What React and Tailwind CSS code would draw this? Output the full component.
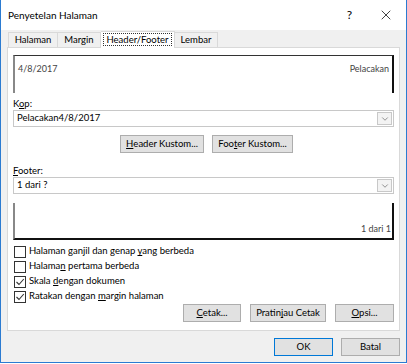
import { X, ChevronDown } from "lucide-react";

const font = { fontFamily: 'Lato, "Noto Sans", sans-serif' };

function Btn({ children, className = "", primary = false }) {
  return (
    <button
      className={`h-[18px] bg-[#e1e1e1] border whitespace-nowrap text-[9.5px] leading-none text-black flex items-center justify-center ${
        primary ? "border-[#0078d7] border-[1.5px]" : "border-[#adadad]"
      } ${className}`}
    >
      {children}
    </button>
  );
}

function Check({ checked, children }) {
  return (
    <div className="flex items-center gap-[3px] h-[15px]">
      <div className="w-[12px] h-[12px] border border-[#333] bg-white flex items-center justify-center">
        {checked && (
          <svg width="10" height="10" viewBox="0 0 10 10">
            <path d="M1.5 5 L4 7.5 L8.8 2" fill="none" stroke="#333" strokeWidth="1.1" />
          </svg>
        )}
      </div>
      <span className="text-[9.5px] text-black whitespace-nowrap">{children}</span>
    </div>
  );
}

function Select({ value }) {
  return (
    <div className="h-[17px] bg-white border border-[#c8c8c8] flex items-center justify-between">
      <span className="pl-[3px] text-[9.5px] text-black">{value}</span>
      <div className="w-[15px] h-[13px] mr-[1px] border border-[#c8c8c8] bg-[#f3f3f3] flex items-center justify-center">
        <ChevronDown size={10} strokeWidth={1.5} color="#555" />
      </div>
    </div>
  );
}

export default function App() {
  return (
    <div style={font} className="w-[407px] h-[364px] bg-white">
      <div className="w-[407px] h-[363px] border-x border-b border-[#2b7bd1] flex flex-col bg-[#f0f0f0]">
        <div className="h-[30px] shrink-0 bg-white flex items-center justify-between pl-[7px] pr-[12px]">
          <span className="text-[10px] text-black">Penyetelan Halaman</span>
          <div className="flex items-center gap-[26px]">
            <span className="text-[12px] text-black">?</span>
            <X size={16} strokeWidth={1.2} color="#111" />
          </div>
        </div>

        <div className="flex items-end pl-[7px] h-[17px] shrink-0">
          <div className="h-[15px] w-[50px] border border-b-0 border-[#d9d9d9] bg-[#f0f0f0] text-[9.5px] leading-[14px] text-center text-black">Halaman</div>
          <div className="h-[15px] w-[43px] border border-b-0 border-l-0 border-[#d9d9d9] bg-[#f0f0f0] text-[9.5px] leading-[14px] text-center text-black">Margin</div>
          <div className="h-[17px] w-[74px] pt-[1px] border border-b-0 border-l-0 border-[#d9d9d9] bg-white text-[9.5px] leading-[13px] text-center text-black relative z-10 -mb-[1px]">
            <span className="border border-dotted border-[#333] px-[2px]">Header/Footer</span>
          </div>
          <div className="h-[15px] w-[43px] border border-b-0 border-l-0 border-[#d9d9d9] bg-[#f0f0f0] text-[9.5px] leading-[14px] text-center text-black">Lembar</div>
        </div>

        <div className="mx-[6px] h-[284px] shrink-0 bg-white border border-[#d9d9d9] px-[5px] flex flex-col">
          <div className="mt-[7px] h-[38px] shrink-0 border-t border-t-[#333] border-l-2 border-l-[#888] border-r-2 border-r-[#111] flex justify-between px-[3px] pt-[6px] text-[9px] text-[#444]">
            <span>4/8/2017</span>
            <span>Pelacakan</span>
          </div>

          <div className="mt-[4px] text-[9.5px] leading-[13px] text-black h-[13px]">
            K<u>o</u>p:
          </div>
          <Select value="Pelacakan4/8/2017" />

          <div className="mt-[8px] flex justify-center gap-[8px] pl-[6px]">
            <Btn className="w-[84px]"><u>H</u>eader Kustom...</Btn>
            <Btn className="w-[81px]">Foo<u>t</u>er Kustom...</Btn>
          </div>

          <div className="mt-[11px] text-[9.5px] leading-[13px] text-black h-[13px]">
            <u>F</u>ooter:
          </div>
          <Select value="1 dari ?" />

          <div className="mt-[9px] h-[37px] shrink-0 border-b-2 border-b-[#111] border-l-2 border-l-[#888] border-r-2 border-r-[#111] flex items-end justify-end px-[1px] pb-[3px] text-[9px] text-[#444]">
            <span>1 dari 1</span>
          </div>

          <div className="mt-[4px] flex flex-col pl-[1px]">
            <Check>Halaman ganjil dan genap <u>y</u>ang berbeda</Check>
            <Check>Halama<u>n</u> pertama berbeda</Check>
            <Check checked>Skala <u>d</u>engan dokumen</Check>
            <Check checked>Ratakan dengan <u>m</u>argin halaman</Check>
          </div>

          <div className="mt-[0px] flex justify-end gap-[9px]">
            <Btn className="w-[58px]"><u>C</u>etak...</Btn>
            <Btn className="w-[76px]">Pratin<u>j</u>au Cetak</Btn>
            <Btn className="w-[59px]"><u>O</u>psi...</Btn>
          </div>
        </div>

        <div className="mt-[7px] flex justify-end gap-[8px] pr-[6px]">
          <Btn primary className="w-[59px]">OK</Btn>
          <Btn className="w-[59px]">Batal</Btn>
        </div>
      </div>
    </div>
  );
}
